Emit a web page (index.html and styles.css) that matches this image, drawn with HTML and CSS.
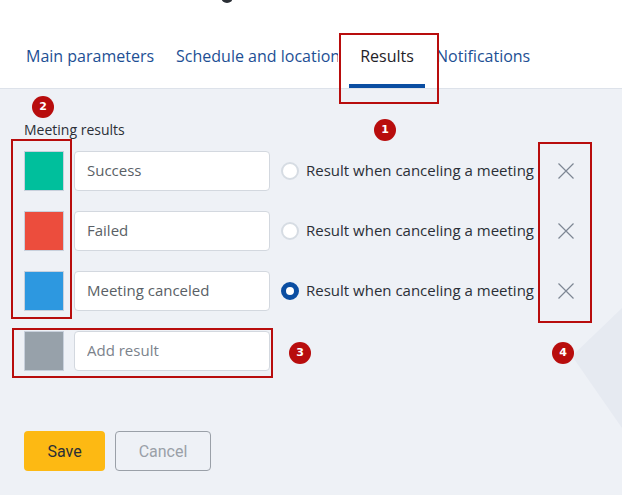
FILE: index.html
```html
<!DOCTYPE html>
<html lang="en">
<head>
    <meta charset="UTF-8">
    <meta name="viewport" content="width=device-width, initial-scale=1.0">
    <title>Meeting results</title>
    <link rel="stylesheet" href="styles.css">
</head>
<body>
    <div class="header">
        <span class="title-tail"></span>
        <div class="tabs">
            <a href="#" class="tab">Main parameters</a>
            <a href="#" class="tab tab-clip">Schedule and location</a>
            <a href="#" class="tab active">Results</a>
            <a href="#" class="tab tab-last">Notifications</a>
        </div>
    </div>

    <div class="content">
        <div class="deco"></div>
        <p class="label">Meeting results</p>

        <div class="results">
            <div class="row">
                <span class="swatch" style="background:#00bf9c"></span>
                <input class="field" type="text" value="Success">
                <span class="radio"></span>
                <span class="radio-text">Result when canceling a meeting</span>
                <button class="remove">
                    <svg width="18" height="18" viewBox="0 0 18 18"><path d="M1.5 1.5 L16.5 16.5 M16.5 1.5 L1.5 16.5" stroke="#7d8794" stroke-width="1.2" fill="none"/></svg>
                </button>
            </div>
            <div class="row">
                <span class="swatch" style="background:#ec4d3d"></span>
                <input class="field" type="text" value="Failed">
                <span class="radio"></span>
                <span class="radio-text">Result when canceling a meeting</span>
                <button class="remove">
                    <svg width="18" height="18" viewBox="0 0 18 18"><path d="M1.5 1.5 L16.5 16.5 M16.5 1.5 L1.5 16.5" stroke="#7d8794" stroke-width="1.2" fill="none"/></svg>
                </button>
            </div>
            <div class="row">
                <span class="swatch" style="background:#2d98e0"></span>
                <input class="field" type="text" value="Meeting canceled">
                <span class="radio checked"></span>
                <span class="radio-text">Result when canceling a meeting</span>
                <button class="remove">
                    <svg width="18" height="18" viewBox="0 0 18 18"><path d="M1.5 1.5 L16.5 16.5 M16.5 1.5 L1.5 16.5" stroke="#7d8794" stroke-width="1.2" fill="none"/></svg>
                </button>
            </div>
            <div class="row">
                <span class="swatch" style="background:#97a1aa"></span>
                <input class="field" type="text" placeholder="Add result">
            </div>
        </div>

        <div class="actions">
            <button class="btn btn-save">Save</button>
            <button class="btn btn-cancel">Cancel</button>
        </div>
    </div>

    <!-- annotation marks -->
    <div class="mark mark-tab"></div>
    <div class="mark mark-swatches"></div>
    <div class="mark mark-add"></div>
    <div class="mark mark-remove"></div>
    <span class="badge badge-1">1</span>
    <span class="badge badge-2">2</span>
    <span class="badge badge-3">3</span>
    <span class="badge badge-4">4</span>
</body>
</html>
```

FILE: styles.css
```css
body {
    margin: 0;
    font-family: "Open Sans", "Liberation Sans", sans-serif;
    background-color: #eef1f6;
    color: #2b2f36;
    position: relative;
    height: 495px;
    overflow: hidden;
}

.header {
    background: #ffffff;
    border-bottom: 1px solid #dde2ea;
    height: 88px;
    position: relative;
}

.title-tail {
    position: absolute;
    left: 221px;
    top: -6px;
    width: 12px;
    height: 9px;
    border: 3px solid #2b2f36;
    border-top: none;
    border-radius: 0 0 7px 7px;
    box-sizing: border-box;
}

.tabs {
    display: flex;
    padding-left: 15px;
    padding-top: 42px;
}

.tab {
    display: block;
    position: relative;
    padding: 0 11px;
    height: 46px;
    font-size: 16px;
    line-height: 28px;
    color: #1d4f94;
    text-decoration: none;
    white-space: nowrap;
}

.tab-clip {
    width: 162px;
    overflow: hidden;
    padding-right: 0;
}

.tab.active {
    width: 98px;
    padding: 0;
    text-align: center;
    color: #1f2227;
    background: #ffffff;
}

.tab.active::after {
    content: "";
    position: absolute;
    left: 11px;
    right: 11px;
    bottom: 0;
    height: 4px;
    background: #0b4ea2;
}

.tab-last {
    padding-left: 0;
}

.content {
    padding: 0 24px;
}

.deco {
    position: absolute;
    right: 0;
    top: 308px;
    width: 50px;
    height: 120px;
    background: #e6eaf1;
    clip-path: polygon(100% 0, 0 40%, 100% 100%);
}

.label {
    margin: 0;
    padding-top: 31px;
    height: 31px;
    font-size: 14px;
    line-height: 20px;
    color: #2b2f36;
}

.results {
    display: flex;
    flex-direction: column;
    gap: 20px;
}

.row {
    display: flex;
    align-items: center;
    height: 40px;
}

.swatch {
    width: 38px;
    height: 38px;
    border: 1px solid #c8d0dc;
    margin-right: 10px;
}

.field {
    width: 196px;
    height: 40px;
    box-sizing: border-box;
    border: 1px solid #d3d8df;
    border-radius: 4px;
    background: #ffffff;
    padding: 0 12px 2px;
    font-family: inherit;
    font-size: 15px;
    color: #5a5f66;
    outline: none;
}

.field::placeholder {
    color: #7b828b;
}

.radio {
    width: 14px;
    height: 14px;
    border: 2px solid #d6dce3;
    border-radius: 50%;
    background: #ffffff;
    margin-left: 11px;
    margin-right: 7px;
}

.radio.checked {
    width: 8px;
    height: 8px;
    border: 5px solid #0b4ea2;
}

.radio-text {
    width: 232px;
    font-size: 15px;
    line-height: 18px;
    padding-bottom: 2px;
    white-space: nowrap;
    color: #2b2f36;
}

.remove {
    background: none;
    border: none;
    padding: 0;
    margin-left: 19px;
    width: 18px;
    height: 18px;
    cursor: pointer;
}

.actions {
    display: flex;
    gap: 10px;
    margin-top: 60px;
}

.btn {
    height: 40px;
    border-radius: 4px;
    font-family: Roboto, "Liberation Sans", sans-serif;
    font-size: 16px;
    cursor: pointer;
}

.btn-save {
    width: 81px;
    background: #fdb913;
    border: none;
    color: #2b2f36;
}

.btn-cancel {
    width: 96px;
    background: transparent;
    border: 1px solid #9aa0a8;
    color: #9aa0a8;
}

.mark {
    position: absolute;
    border: 2px solid #b80d0d;
}

.mark-tab {
    left: 339px;
    top: 33px;
    width: 96px;
    height: 67px;
}

.mark-swatches {
    left: 11px;
    top: 139px;
    width: 57px;
    height: 176px;
}

.mark-add {
    left: 12px;
    top: 328px;
    width: 257px;
    height: 46px;
}

.mark-remove {
    left: 538px;
    top: 142px;
    width: 50px;
    height: 177px;
}

.badge {
    position: absolute;
    width: 22px;
    height: 22px;
    border-radius: 50%;
    background: #b80d0d;
    color: #ffffff;
    font-family: "DejaVu Sans", sans-serif;
    font-weight: bold;
    font-size: 11px;
    line-height: 22px;
    text-align: center;
}

.badge-1 { left: 374px; top: 119px; }
.badge-2 { left: 32px; top: 96px; }
.badge-3 { left: 289px; top: 342px; }
.badge-4 { left: 552px; top: 342px; }
```
